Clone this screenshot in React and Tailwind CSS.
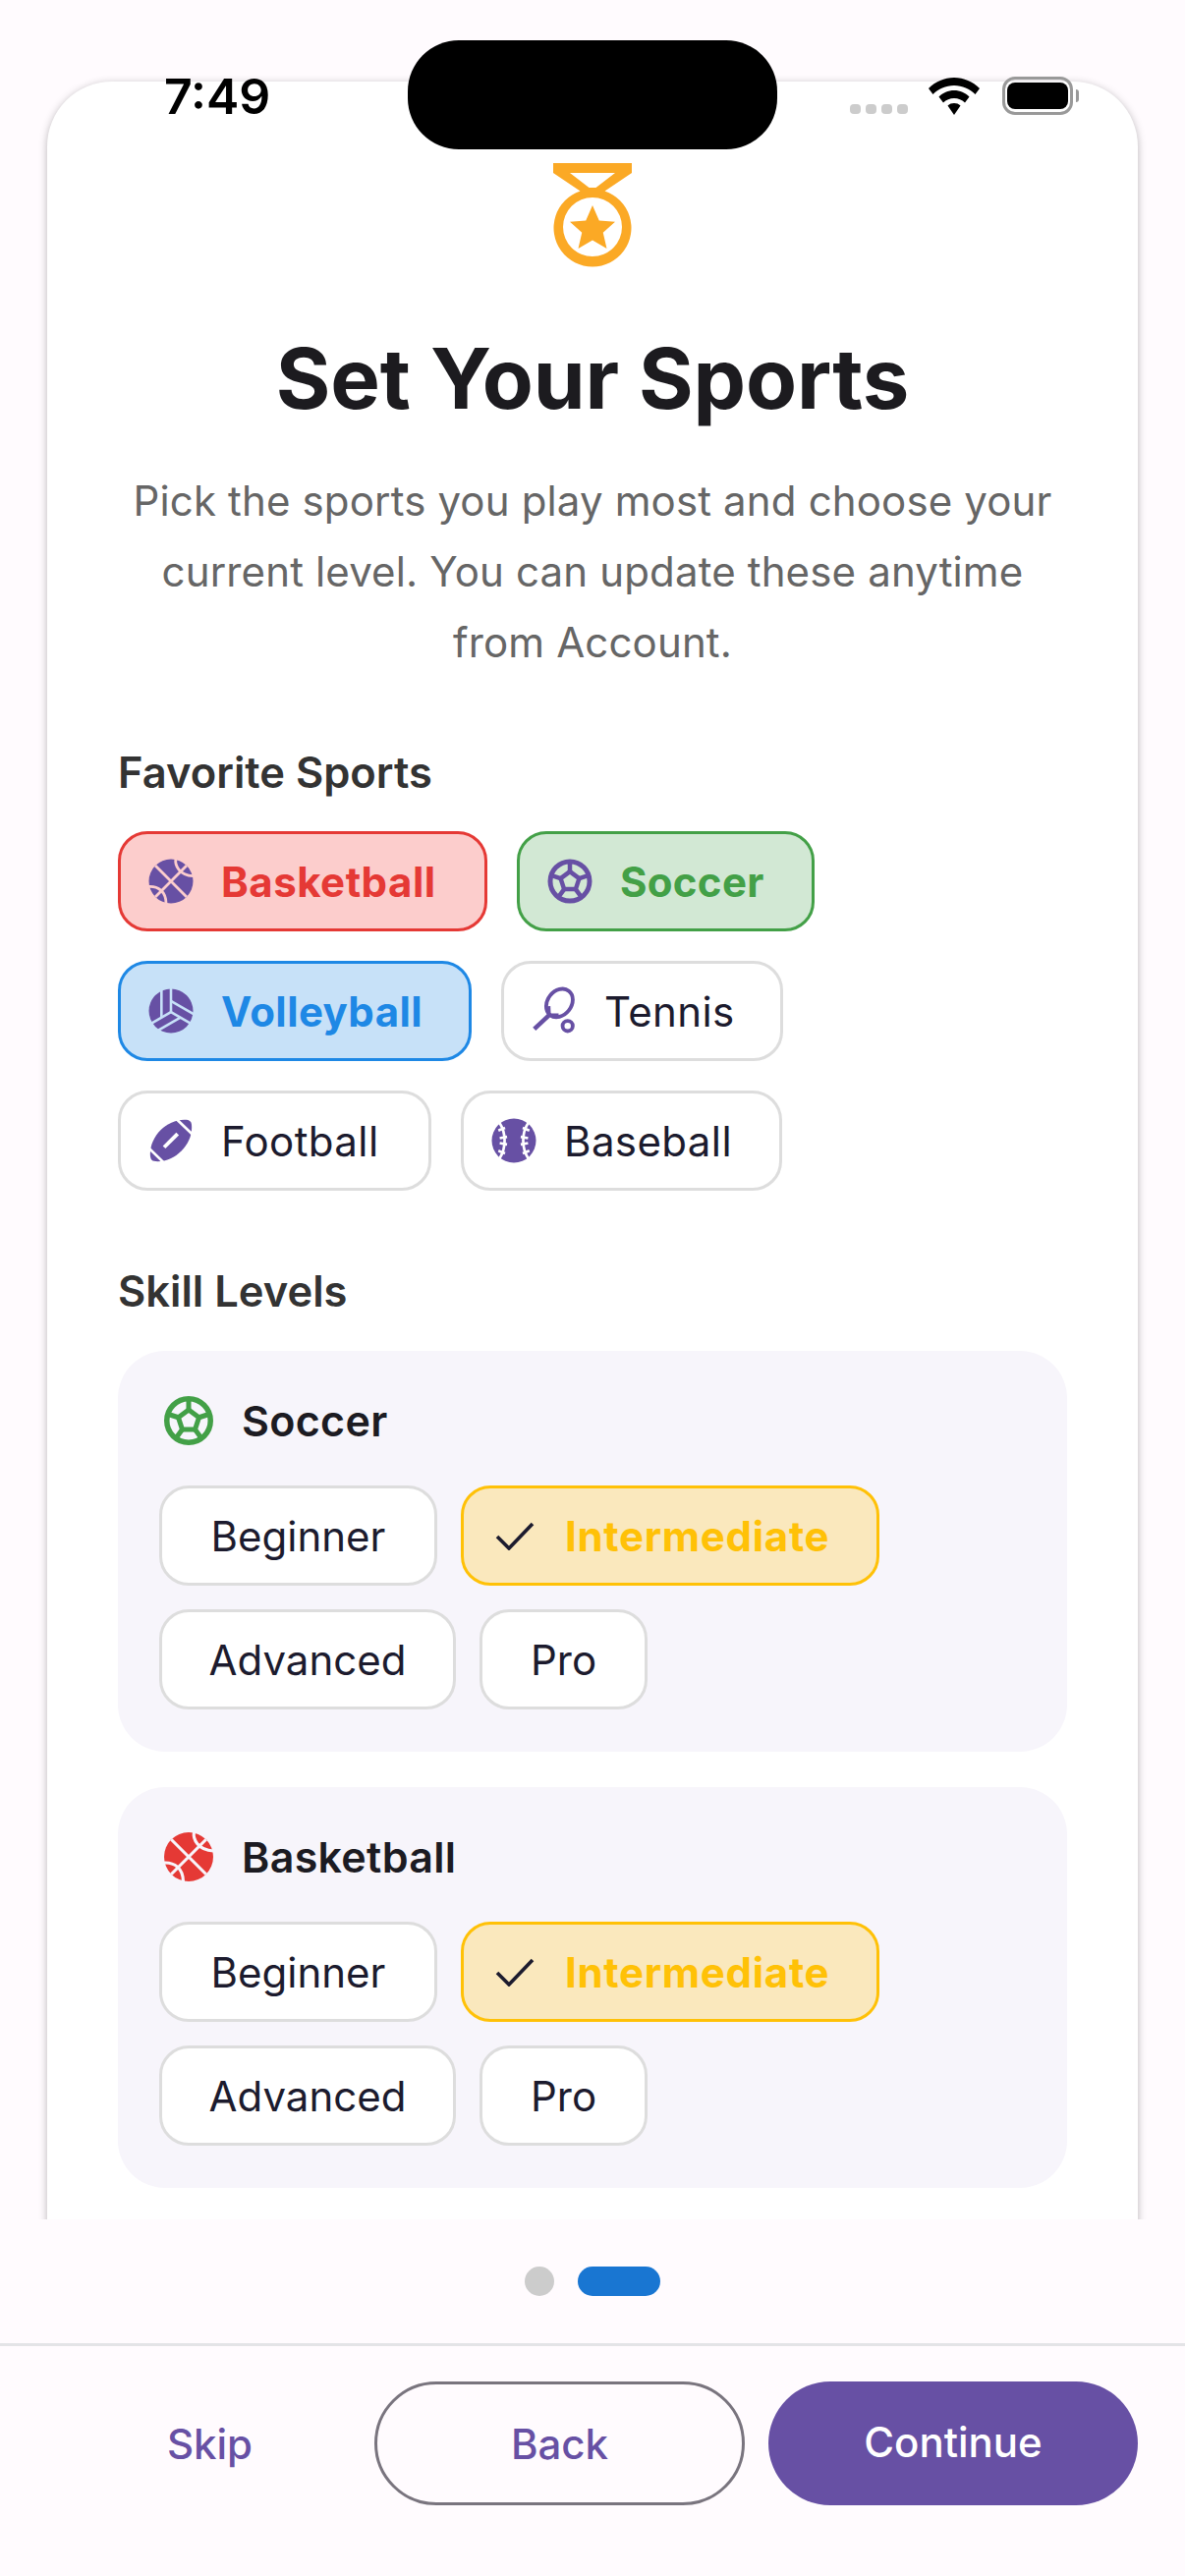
import React from "react";

const PURPLE = "#6750A4";
const FONT = { fontFamily: "Inter, 'Noto Sans', sans-serif" };

function Basketball({ color, gap, size = 54 }) {
  return (
    <svg width={size} height={size} viewBox="0 0 24 24" className="shrink-0">
      <circle cx="12" cy="12" r="10" fill={color} />
      <g fill="none" stroke={gap} strokeWidth="1.25">
        <path d="M4.9 4.9L19.1 19.1M19.1 4.9L4.9 19.1" />
        <path d="M14.2 1.8C13.6 4.8 15.8 9.2 22 9.6" />
        <path d="M2 14.4C6 14.2 9.8 16.4 9.8 22.2" />
      </g>
    </svg>
  );
}

function Soccer({ color, size = 54 }) {
  return (
    <svg width={size} height={size} viewBox="0 0 24 24" className="shrink-0">
      <g fill="none" stroke={color} strokeLinejoin="round">
        <circle cx="12" cy="12" r="8.9" strokeWidth="2.2" />
        <path d="M12 7.6L16.2 10.7L14.6 15.6H9.4L7.8 10.7Z" strokeWidth="2" />
        <path d="M12 3V7.6M16.2 10.7L20.6 9.3M14.6 15.6L17.3 19.3M9.4 15.6L6.7 19.3M7.8 10.7L3.4 9.3" strokeWidth="2" />
      </g>
    </svg>
  );
}

function Volleyball({ color, gap, size = 54 }) {
  const spokes = (
    <g fill="none" stroke={gap} strokeWidth="1.15">
      <path d="M12 12.5V1" />
      <path d="M7.7 15V1" />
    </g>
  );
  return (
    <svg width={size} height={size} viewBox="0 0 24 24" className="shrink-0">
      <circle cx="12" cy="12" r="10" fill={color} />
      <g>{spokes}</g>
      <g transform="rotate(120 12 12.5)">{spokes}</g>
      <g transform="rotate(240 12 12.5)">{spokes}</g>
    </svg>
  );
}

function Tennis({ color, size = 54 }) {
  return (
    <svg width={size} height={size} viewBox="0 0 24 24" className="shrink-0">
      <g fill="none" stroke={color} strokeWidth="1.7">
        <ellipse cx="14.4" cy="8.4" rx="5.4" ry="6.9" transform="rotate(38 14.4 8.4)" />
        <path d="M3 20.2L9.8 13.8" strokeWidth="2" />
        <path d="M9.6 9.8L9.8 13.8L14 13.8" strokeWidth="1.4" />
        <circle cx="18.1" cy="18.8" r="2.3" />
      </g>
    </svg>
  );
}

function Football({ color, gap, size = 54 }) {
  return (
    <svg width={size} height={size} viewBox="0 0 24 24" className="shrink-0">
      <path
        d="M18 2.600C20.800 2.600 21.400 3.400 21.400 6C21.400 14 14 21.400 6 21.400C3.400 21.400 2.600 20.800 2.600 18C2.600 10 10 2.600 18 2.600Z"
        fill={color}
      />
      <path d="M14 1.800L22 9.400M1.600 15L9.200 22.400" stroke={gap} strokeWidth="1.2" fill="none" />
      <path d="M8.900 15L15 8.900" stroke={gap} strokeWidth="1.7" fill="none" />
    </svg>
  );
}

function Baseball({ color, gap, size = 54 }) {
  return (
    <svg width={size} height={size} viewBox="0 0 24 24" className="shrink-0">
      <circle cx="12" cy="12" r="10" fill={color} />
      <g fill="none" stroke={gap} strokeWidth="1.2">
        <path d="M5.400 3.800C8.600 8.600 8.600 15.400 5.400 20.200" />
        <path d="M18.600 3.800C15.400 8.600 15.400 15.400 18.600 20.200" />
        <path d="M5 7.400L8 6.200M5.600 10.900L8.900 10.300M5.600 13.100L8.900 13.700M5 16.600L8 17.800" />
        <path d="M19 7.400L16 6.200M18.400 10.900L15.100 10.300M18.400 13.100L15.100 13.700M19 16.600L16 17.800" />
      </g>
    </svg>
  );
}

function Medal() {
  return (
    <svg width="120" height="120" viewBox="0 0 24 24" className="overflow-visible">
      <path
        fillRule="evenodd"
        fill="#FBA925"
        d="M4 2H20V4L14.500 7.700A7.900 7.900 0 1 1 9.500 7.700L4 4ZM7.400 4L11.300 7H12.700L16.600 4ZM18 15A6 6 0 1 0 6 15A6 6 0 1 0 18 15Z"
      />
      <path
        fill="#FBA925"
        d="M12 10.600L13.350 13.700L16.600 13.950L14.150 16.150L14.900 19.400L12 17.700L9.100 19.400L9.850 16.150L7.400 13.950L10.650 13.700Z"
      />
    </svg>
  );
}

function SportChip({ label, icon, active, w }) {
  const tones = {
    red: "bg-[#FCCDCC] border-[#E53935] text-[#E53935] font-bold tracking-[0.5px]",
    green: "bg-[#D2E8D4] border-[#43A047] text-[#43A047] font-bold tracking-[0.3px]",
    blue: "bg-[#C7E1F8] border-[#1E88E5] text-[#1E88E5] font-bold tracking-[0.4px]",
    none: "bg-white border-[#DDDDDD] text-[#1C1B2E] font-normal tracking-[0.4px]",
  };
  return (
    <div
      className={`box-border flex h-[102px] items-center gap-[24px] rounded-[30px] border-[3px] pl-[24px] text-[42px] ${tones[active]} ${w}`}
    >
      {icon}
      <span className="whitespace-nowrap">{label}</span>
    </div>
  );
}

function LevelChip({ label, w, selected }) {
  return (
    <div
      className={
        selected
          ? `box-border flex h-[102px] items-center rounded-[30px] border-[3px] border-[#FFC107] bg-[#FAE8BD] pl-[32px] text-[42px] font-bold tracking-[0.7px] text-[#FFC107] ${w}`
          : `box-border flex h-[102px] items-center justify-center rounded-[30px] border-[3px] border-[#DDDDDD] bg-white text-[42px] text-[#1C1B2E] ${w}`
      }
    >
      {selected && (
        <svg width="40" height="30" viewBox="0 0 40 30" className="mr-[31px] shrink-0">
          <path d="M2 16L14 28L38 3" fill="none" stroke="#1C1B2E" strokeWidth="3.6" />
        </svg>
      )}
      <span className="whitespace-nowrap">{label}</span>
    </div>
  );
}

function SkillCard({ title, icon }) {
  return (
    <div className="rounded-[48px] bg-[#F7F5FB] px-[42px] pb-[43px] pt-[41px]">
      <div className="flex h-[60px] items-center gap-[24px]">
        {icon}
        <span className="text-[43px] font-semibold tracking-[0.3px] text-[#1C1B22]">{title}</span>
      </div>
      <div className="mt-[36px] flex gap-[24px]">
        <LevelChip label="Beginner" w="w-[283px]" />
        <LevelChip label="Intermediate" w="w-[426px]" selected />
      </div>
      <div className="mt-[24px] flex gap-[24px]">
        <LevelChip label="Advanced" w="w-[302px]" />
        <LevelChip label="Pro" w="w-[171px]" />
      </div>
    </div>
  );
}

function StatusBar() {
  return (
    <>
      <div className="absolute left-[415px] top-[41px] h-[111px] w-[376px] rounded-[52px] bg-black" />
      <span className="absolute left-[167px] top-[66px] text-[50px] font-semibold leading-[64px] text-black">7:49</span>
      <div className="absolute left-[865px] top-[106px] flex gap-[5px]">
        {[0, 1, 2, 3].map((i) => (
          <div key={i} className="h-[10px] w-[11px] rounded-[4px] bg-[#CCCCCC]" />
        ))}
      </div>
      <svg className="absolute left-[945px] top-[79px]" width="52" height="38" viewBox="0 0 52 38">
        <path
          d="M26 0C36 0 45 4 52 11L47.500 17C42 11.500 34.500 8 26 8C17.500 8 10 11.500 4.500 17L0 11C7 4 16 0 26 0Z"
          fill="#000"
        />
        <path d="M26 13C32 13 37.500 15.500 41.500 19.500L37 25.500C34 22.500 30.200 21 26 21C21.800 21 18 22.500 15 25.500L10.500 19.500C14.500 15.500 20 13 26 13Z" fill="#000" />
        <path d="M26 26C28.500 26 30.800 26.800 32.500 28.500L26 38L19.500 28.500C21.200 26.800 23.500 26 26 26Z" fill="#000" />
      </svg>
      <div className="absolute left-[1020px] top-[78px] box-border flex h-[39px] w-[72px] items-center justify-center rounded-[13px] border-[3px] border-[#999999]">
        <div className="h-[27px] w-[62px] rounded-[8px] bg-black" />
      </div>
      <div className="absolute left-[1095px] top-[91px] h-[13px] w-[3px] rounded-r-[3px] bg-[#999999]" />
    </>
  );
}

export default function App() {
  const gapRed = "#FCCDCC";
  const gapBlue = "#C7E1F8";
  return (
    <div className="relative flex h-[2622px] w-[1206px] flex-col overflow-hidden bg-[#FFFBFE]" style={FONT}>
      <div className="h-[2259px] shrink-0 overflow-hidden px-[48px] pt-[83px]">
        <div className="min-h-[2300px] rounded-[66px] bg-white px-[72px] pt-[73px] shadow-[0_2px_8px_rgba(0,0,0,0.28)]">
          <div className="flex justify-center">
            <Medal />
          </div>
          <h1 className="mt-[60px] text-center text-[85px] font-bold leading-[100px] tracking-[-0.1px] text-[#1C1B1F]">Set Your Sports</h1>
          <p className="-mx-[40px] mt-[38px] whitespace-nowrap text-center text-[42px] leading-[72px] tracking-[0.15px] text-[#666666]">
            Pick the sports you play most and choose your
            <br />
            current level. You can update these anytime
            <br />
            from Account.
          </p>
          <h2 className="mt-[72px] text-[43.5px] font-semibold leading-[48px] text-[#333333]">Favorite Sports</h2>
          <div className="mt-[36px] flex gap-[30px]">
            <SportChip label="Basketball" active="red" w="w-[376px]" icon={<Basketball color={PURPLE} gap={gapRed} />} />
            <SportChip label="Soccer" active="green" w="w-[303px]" icon={<Soccer color={PURPLE} />} />
          </div>
          <div className="mt-[30px] flex gap-[30px]">
            <SportChip label="Volleyball" active="blue" w="w-[360px]" icon={<Volleyball color={PURPLE} gap={gapBlue} />} />
            <SportChip label="Tennis" active="none" w="w-[287px]" icon={<Tennis color={PURPLE} />} />
          </div>
          <div className="mt-[30px] flex gap-[30px]">
            <SportChip label="Football" active="none" w="w-[319px]" icon={<Football color={PURPLE} gap="#FFFFFF" />} />
            <SportChip label="Baseball" active="none" w="w-[327px]" icon={<Baseball color={PURPLE} gap="#FFFFFF" />} />
          </div>
          <h2 className="mt-[78px] text-[43.5px] font-semibold leading-[48px] text-[#333333]">Skill Levels</h2>
          <div className="mt-[37px] flex flex-col gap-[36px]">
            <SkillCard title="Soccer" icon={<Soccer color="#43A047" size={60} />} />
            <SkillCard title="Basketball" icon={<Basketball color="#E53935" gap="#F7F5FB" size={60} />} />
          </div>
        </div>
      </div>

      <div className="flex h-[126px] shrink-0 items-start justify-center gap-[24px] pt-[48px]">
        <div className="h-[30px] w-[30px] rounded-full bg-[#CCCCCC]" />
        <div className="h-[30px] w-[84px] rounded-full bg-[#1976D2]" />
      </div>
      <div className="h-[3px] shrink-0 bg-[#E4E4E7]" />
      <div className="flex items-start gap-[24px] px-[48px] pt-[36px]">
        <div className="flex h-[126px] w-[309px] shrink-0 items-center justify-center pl-[22px] text-[42px] font-medium text-[#6750A4]">
          <span>Skip</span>
        </div>
        <div className="box-border flex h-[126px] w-[377px] items-center justify-center rounded-full border-[3px] border-[#79747E] text-[42px] font-medium text-[#6750A4]">
          <span>Back</span>
        </div>
        <div className="flex h-[126px] w-[376px] items-center justify-center rounded-full bg-[#6750A4] text-[42px] font-medium text-white">
          <span className="mt-[-4px]">Continue</span>
        </div>
      </div>

      <StatusBar />
    </div>
  );
}
